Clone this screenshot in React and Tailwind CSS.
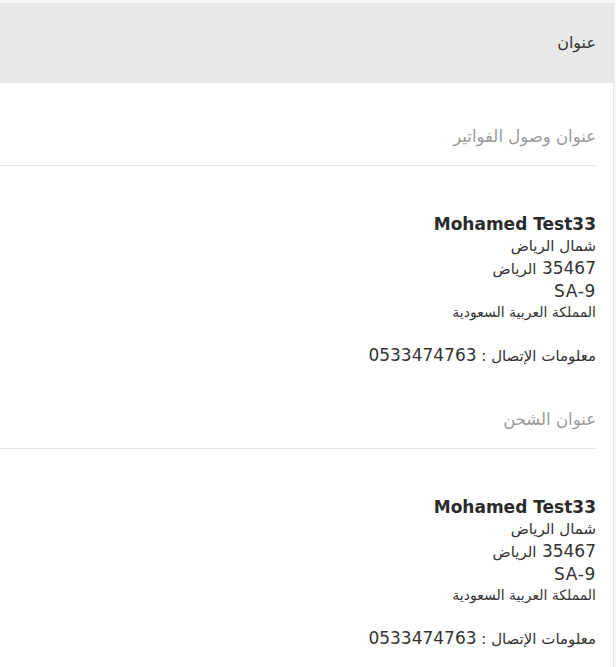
const address = {
  name: 'Mohamed Test33',
  street: 'شمال الرياض',
  cityLine: '35467',
  city: 'الرياض',
  region: 'SA-9',
  country: 'المملكة العربية السعودية',
  phone: '0533474763',
};

function AddressBlock({ title, data, first }) {
  return (
    <section>
      <h3
        className={`${first ? 'pt-[42px]' : 'pt-[40px]'} pb-[16px] pr-[17px] text-[16.5px] leading-[24px] text-[#9a9a9a]`}
      >
        {title}
      </h3>
      <div className="mr-[17px] border-b border-[#e6e6e6]" />
      <div className="pr-[17px] pt-[47px] text-[#333]">
        <p className="text-[17px] font-bold leading-[22px] text-[#2b2b2b]">{data.name}</p>
        <p className="text-[15px] leading-[22px]">{data.street}</p>
        <p className="text-[17px] leading-[22px]">
          {data.cityLine} <span className="text-[15px]">{data.city}</span>
        </p>
        <p className="text-[17px] tracking-[0.04em] leading-[22px]">{data.region}</p>
        <p className="text-[14px] leading-[20px]">{data.country}</p>
        <p className="mt-[21px] text-[15px] leading-[24px]">
          معلومات الإتصال : <span className="text-[17px]">{data.phone}</span>
        </p>
      </div>
    </section>
  );
}

export default function App() {
  return (
    <div
      dir="rtl"
      className="min-h-screen bg-[#f6f6f6] pt-[3px]"
      style={{ fontFamily: '"DejaVu Sans", "Open Sans", sans-serif' }}
    >
      <div className="mr-[2px] border-r border-[#e3e3e3] bg-white pb-[20px]">
        <div className="flex h-[80px] items-center bg-[#e8e8e8] pr-[17px] text-[16px] text-[#333]">
          عنوان
        </div>
        <AddressBlock title="عنوان وصول الفواتير" data={address} first />
        <AddressBlock title="عنوان الشحن" data={address} />
      </div>
    </div>
  );
}
